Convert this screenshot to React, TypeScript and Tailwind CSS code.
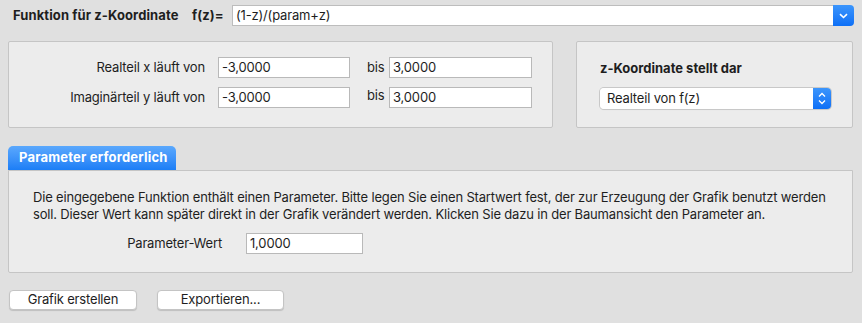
import React from "react";

function TextBox({ value, className }: { value: string; className: string }) {
  return (
    <div
      className={`h-[21px] bg-white border border-[#b9b9b9] px-[3px] flex items-center text-[13px] text-[#1e1e1e] ${className}`}
    >
      {value}
    </div>
  );
}

function MacButton({ text, className }: { text: string; className: string }) {
  return (
    <div
      className={`h-[20px] bg-white rounded-[4px] border border-[#c4c4c4] shadow-[0_1px_1px_rgba(0,0,0,0.15)] flex items-center justify-center text-[13px] ${className}`}
    >
      {text}
    </div>
  );
}

export default function App() {
  return (
    <div
      className="w-[862px] h-[323px] bg-[#e0e0e0] text-[13px] text-[#1e1e1e] tracking-[-0.17px] overflow-hidden"
      style={{ fontFamily: "Inter, 'Noto Sans', sans-serif" }}
    >
      {/* Funktion */}
      <div className="flex items-center pt-[5px] pl-[13px]">
        <span className="font-bold w-[179px] tracking-[0.1px]">Funktion für z-Koordinate</span>
        <span className="font-bold w-[40px] tracking-[0.1px]">f(z)=</span>
        <div className="flex h-[21px] w-[622px]">
          <div className="flex-1 bg-white border border-[#bdbdbd] border-r-0 flex items-center px-[3px]">
            (1-z)/(param+z)
          </div>
          <div className="w-[21px] rounded-r-[4px] bg-gradient-to-b from-[#3b95fc] to-[#0c6ff6] flex items-center justify-center">
            <svg width="9" height="6" viewBox="0 0 9 6">
              <path d="M1 1.2 L4.5 4.5 L8 1.2" stroke="white" strokeWidth="1.6" fill="none" />
            </svg>
          </div>
        </div>
      </div>

      {/* Bereich + Darstellung */}
      <div className="flex gap-[23px] mt-[15px] pl-[8px]">
        <div className="w-[545px] h-[87px] bg-[#ececec] border border-[#c5c5c5] rounded-[2px] pt-[15px]">
          <div className="flex items-center h-[21px]">
            <span className="w-[196px] text-right">Realteil x läuft von</span>
            <TextBox value="-3,0000" className="ml-[13px] w-[132px]" />
            <span className="ml-[17px] w-[22px]">bis</span>
            <TextBox value="3,0000" className="w-[143px]" />
          </div>
          <div className="flex items-center h-[21px] mt-[9px]">
            <span className="w-[196px] text-right">Imaginärteil y läuft von</span>
            <TextBox value="-3,0000" className="ml-[13px] w-[132px]" />
            <span className="ml-[17px] w-[22px] -mt-[4px]">bis</span>
            <TextBox value="3,0000" className="w-[143px]" />
          </div>
        </div>
        <div className="w-[277px] h-[87px] bg-[#ececec] border border-[#c5c5c5] rounded-[2px] pl-[23px] pt-[16px]">
          <div className="font-bold tracking-[0px] h-[20px] leading-[20px]">z-Koordinate stellt dar</div>
          <div className="flex h-[21px] w-[231px] mt-[10px] rounded-[4px] shadow-[0_0_0_1px_#c8c8c8,0_1px_1px_rgba(0,0,0,0.1)]">
            <div className="flex-1 bg-white rounded-l-[4px] flex items-center px-[7px]">Realteil von f(z)</div>
            <div className="w-[18px] rounded-r-[4px] bg-gradient-to-b from-[#3b95fc] to-[#0c6ff6] flex items-center justify-center">
              <svg width="8" height="13" viewBox="0 0 8 13">
                <path d="M1 4.5 L4 1.5 L7 4.5 M1 8.5 L4 11.5 L7 8.5" stroke="white" strokeWidth="1.3" fill="none" />
              </svg>
            </div>
          </div>
        </div>
      </div>

      {/* Parameter */}
      <div className="pl-[8px] mt-[18px]">
        <div className="w-[168px] h-[24px] rounded-t-[5px] bg-gradient-to-b from-[#5aa8fd] to-[#1b7ef6] text-white font-bold tracking-[0.2px] flex items-center pl-[11px]">
          Parameter erforderlich
        </div>
        <div className="w-[845px] h-[103px] bg-[#ececec] border border-[#c5c5c5] rounded-b-[2px] pl-[24px] pt-[18px]">
          <p className="leading-[17px]">
            Die eingegebene Funktion enthält einen Parameter. Bitte legen Sie einen Startwert fest, der zur Erzeugung der Grafik benutzt werden
            <br />
            soll. Dieser Wert kann später direkt in der Grafik verändert werden. Klicken Sie dazu in der Baumansicht den Parameter an.
          </p>
          <div className="flex items-center mt-[10px]">
            <span className="w-[189px] text-right">Parameter-Wert</span>
            <TextBox value="1,0000" className="ml-[24px] w-[117px]" />
          </div>
        </div>
      </div>

      {/* Buttons */}
      <div className="flex gap-[20px] pl-[9px] mt-[17px]">
        <MacButton text="Grafik erstellen" className="w-[128px]" />
        <MacButton text="Exportieren..." className="w-[127px]" />
      </div>
    </div>
  );
}
